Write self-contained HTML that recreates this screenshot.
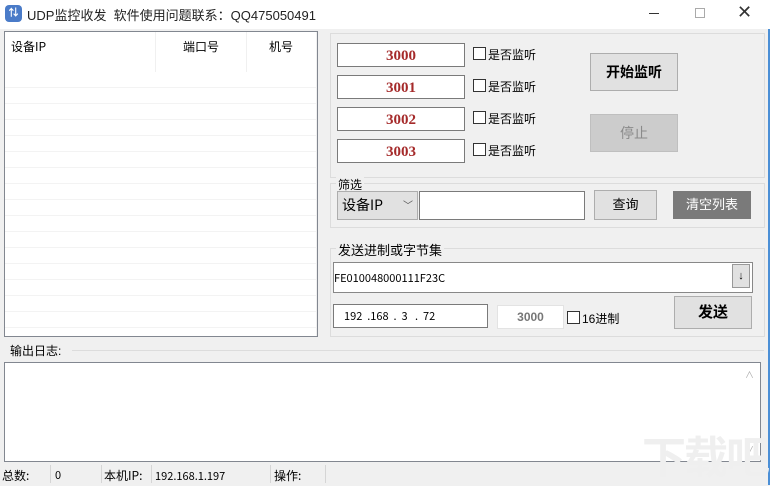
<!DOCTYPE html><html><head><meta charset="utf-8"><style>
*{box-sizing:border-box;margin:0;padding:0}
body{width:770px;height:485px;background:#f0f0f0;font-family:"Liberation Sans","Noto Sans CJK SC",sans-serif;font-size:12px;color:#000;position:relative;overflow:hidden}
.a{position:absolute}
.sim{font-family:"WenQuanYi Zen Hei","Noto Sans CJK SC",sans-serif}
.inp{position:absolute;background:#fff;border:1px solid #7a7a7a}
.num{color:#a52a2a;font-weight:bold;font-size:15px;text-align:center;line-height:24px;font-family:"Liberation Serif","Noto Serif CJK SC",serif}
.cb{position:absolute;width:13px;height:13px;border:1px solid #333;background:#fff}
.btn{position:absolute;background:#e1e1e1;border:1px solid #adadad;text-align:center}
.grp{position:absolute;border:1px solid #dcdcdc}
</style></head><body>
<div class="a" style="left:0;top:0;width:770px;height:29px;background:#fff"></div>
<div class="a" style="left:5px;top:5px;width:17px;height:17px;border-radius:4px;background:#4a7bc8;color:#fff;font-size:10px;text-align:center;line-height:17px;font-weight:bold">⇅</div>
<div class="a" style="left:27px;top:5px;font-size:13px;color:#222">UDP监控收发&nbsp;&nbsp;软件使用问题联系：QQ475050491</div>
<div class="a" style="left:649px;top:13px;width:10px;height:1px;background:#333"></div>
<div class="a" style="left:695px;top:8px;width:10px;height:10px;border:1px solid #aaa"></div>
<div class="a" style="left:737px;top:2px;font-size:18px;color:#333">✕</div>
<div class="a" style="left:768px;top:29px;width:2px;height:456px;background:#4b8fd6"></div>

<div class="a" style="left:4px;top:31px;width:314px;height:306px;background:#fff;border:1px solid #828790"></div>
<div class="a" style="left:155px;top:32px;width:1px;height:304px;background:#f0f0f0"></div>
<div class="a" style="left:246px;top:32px;width:1px;height:304px;background:#f0f0f0"></div>
<div class="a" style="left:316px;top:32px;width:1px;height:304px;background:#f0f0f0"></div>
<div class="a sim" style="left:11px;top:38px">设备IP</div>
<div class="a sim" style="left:183px;top:38px">端口号</div>
<div class="a sim" style="left:269px;top:38px">机号</div>
<div class="a" style="left:5px;top:72px;width:311px;height:264px;background:repeating-linear-gradient(#fff 0,#fff 15px,#f3f3f3 15px,#f3f3f3 16px)"></div>

<div class="grp" style="left:330px;top:33px;width:435px;height:145px"></div>
<div class="inp num" style="left:337px;top:43px;width:128px;height:24px">3000</div>
<div class="inp num" style="left:337px;top:75px;width:128px;height:24px">3001</div>
<div class="inp num" style="left:337px;top:107px;width:128px;height:24px">3002</div>
<div class="inp num" style="left:337px;top:139px;width:128px;height:24px">3003</div>
<div class="cb" style="left:473px;top:47px"></div><div class="a" style="left:488px;top:46px">是否监听</div>
<div class="cb" style="left:473px;top:79px"></div><div class="a" style="left:488px;top:78px">是否监听</div>
<div class="cb" style="left:473px;top:111px"></div><div class="a" style="left:488px;top:110px">是否监听</div>
<div class="cb" style="left:473px;top:143px"></div><div class="a" style="left:488px;top:142px">是否监听</div>
<div class="btn" style="left:590px;top:53px;width:88px;height:38px;line-height:36px;font-size:14px;font-weight:bold">开始监听</div>
<div class="btn" style="left:590px;top:114px;width:88px;height:38px;line-height:36px;font-size:14px;color:#8a8a8a;background:#cccccc;border-color:#bfbfbf">停止</div>

<div class="grp" style="left:330px;top:183px;width:435px;height:45px"></div>
<div class="a" style="left:336px;top:176px;background:#f0f0f0;padding:0 2px">筛选</div>
<div class="a sim" style="left:337px;top:191px;width:81px;height:29px;background:#e1e1e1;border:1px solid #adadad;font-size:14px;line-height:26px;padding-left:4px">设备IP<span style="position:absolute;left:65px;font-size:10px;color:#555">﹀</span></div>
<div class="inp" style="left:419px;top:191px;width:166px;height:29px"></div>
<div class="btn" style="left:594px;top:190px;width:63px;height:30px;line-height:28px;font-size:13px">查询</div>
<div class="a" style="left:673px;top:191px;width:78px;height:28px;background:#7a7a7a;color:#fff;text-align:center;line-height:28px;font-size:13px">清空列表</div>

<div class="grp" style="left:330px;top:248px;width:435px;height:89px"></div>
<div class="a" style="left:336px;top:240px;background:#f0f0f0;padding:0 2px;font-size:13px">发送进制或字节集</div>
<div class="inp" style="left:333px;top:262px;width:420px;height:31px;border-color:#888"></div>
<div class="a sim" style="left:334px;top:270px;font-size:11px">FE010048000111F23C</div>
<div class="a" style="left:732px;top:264px;width:18px;height:24px;background:#e1e1e1;border:1px solid #999;text-align:center;line-height:22px;font-size:11px">↓</div>
<div class="inp" style="left:333px;top:304px;width:155px;height:24px"></div>
<div class="a sim" style="left:344px;top:308px;font-size:11px;word-spacing:0">192&nbsp;&nbsp;.168&nbsp;&nbsp;.&nbsp;&nbsp;3&nbsp;&nbsp;&nbsp;.&nbsp;&nbsp;72</div>
<div class="a" style="left:497px;top:305px;width:67px;height:24px;background:#fff;border:1px solid #e3e3e3;color:#777;font-weight:bold;text-align:center;line-height:22px">3000</div>
<div class="cb" style="left:567px;top:311px"></div><div class="a" style="left:582px;top:310px">16进制</div>
<div class="btn" style="left:674px;top:296px;width:78px;height:33px;line-height:31px;font-size:15px;font-weight:bold">发送</div>

<div class="a" style="left:10px;top:342px;background:#f0f0f0;padding-right:4px">输出日志:</div>
<div class="a" style="left:72px;top:350px;width:692px;height:1px;background:#dcdcdc"></div>
<div class="a" style="left:4px;top:362px;width:757px;height:100px;background:#fff;border:1px solid #828790"></div>
<div class="a" style="left:745px;top:368px;font-size:9px;color:#aaa">∧</div>
<div class="a" style="left:745px;top:443px;font-size:9px;color:#aaa">∨</div>
<div class="a" style="left:642px;top:422px;font-size:44px;color:#efefef;font-weight:bold;letter-spacing:-2px">下载吧</div>

<div class="a" style="left:50px;top:465px;width:1px;height:18px;background:#d5d5d5"></div>
<div class="a" style="left:101px;top:465px;width:1px;height:18px;background:#d5d5d5"></div>
<div class="a" style="left:151px;top:465px;width:1px;height:18px;background:#d5d5d5"></div>
<div class="a" style="left:270px;top:465px;width:1px;height:18px;background:#d5d5d5"></div>
<div class="a" style="left:325px;top:465px;width:1px;height:18px;background:#d5d5d5"></div>
<div class="a sim" style="left:2px;top:467px">总数:</div>
<div class="a sim" style="left:55px;top:467px;font-size:11px">0</div>
<div class="a sim" style="left:104px;top:467px">本机IP:</div>
<div class="a sim" style="left:155px;top:468px;font-size:11px">192.168.1.197</div>
<div class="a sim" style="left:274px;top:467px">操作:</div>
</body></html>
